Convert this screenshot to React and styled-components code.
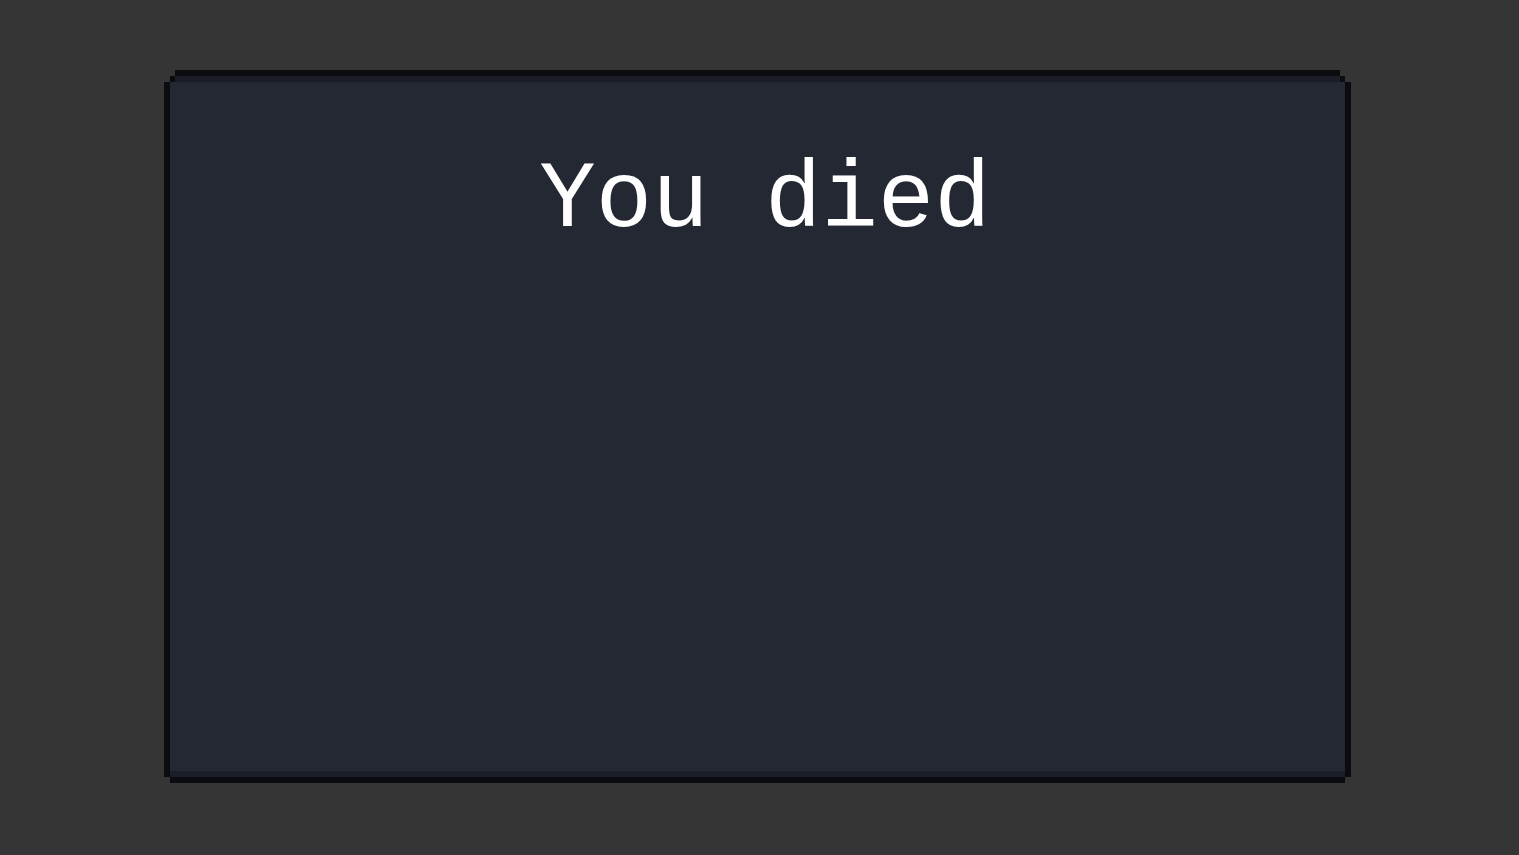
import React from "react";
import styled, { createGlobalStyle } from "styled-components";

const GlobalStyle = createGlobalStyle`
  html, body {
    margin: 0;
    padding: 0;
    background: #353535;
    height: 100%;
  }
  #root {
    min-height: 100vh;
  }
`;

const Page = styled.div`
  display: flex;
  align-items: flex-start;
  padding: 76px 0 0 170px;
  min-height: 100vh;
  box-sizing: border-box;
`;

// pixel-art frame: dark outline drawn with stepped box-shadows
const Panel = styled.div`
  position: relative;
  width: 1175px;
  height: 701px;
  box-sizing: border-box;
  background: #242832;
  border-top: 6px solid #1a1c27;
  border-bottom: 6px solid #1b1d28;
  box-shadow:
    -9px 3px 0 -3px #0b0c10,
    9px 3px 0 -3px #0b0c10,
    0 -11px 0 -5px #0b0c10,
    0 6px 0 0 #0b0c10;
  display: flex;
  flex-direction: column;
  align-items: center;

  &::before,
  &::after {
    content: "";
    position: absolute;
    top: -6px;
    width: 5px;
    height: 6px;
    background: #0b0c10;
  }
  &::before {
    left: 0;
  }
  &::after {
    right: 0;
  }
`;

const Title = styled.h1`
  margin: 71px 0 0 15px;
  font-family: "Nimbus Mono PS", "Nimbus Mono L", "Courier New", "Liberation Mono", monospace;
  font-weight: normal;
  font-size: 94px;
  line-height: 96px;
  color: #ffffff;
  white-space: pre;
`;

export default function App() {
  return (
    <>
      <GlobalStyle />
      <Page>
        <Panel>
          <Title>You died</Title>
        </Panel>
      </Page>
    </>
  );
}
